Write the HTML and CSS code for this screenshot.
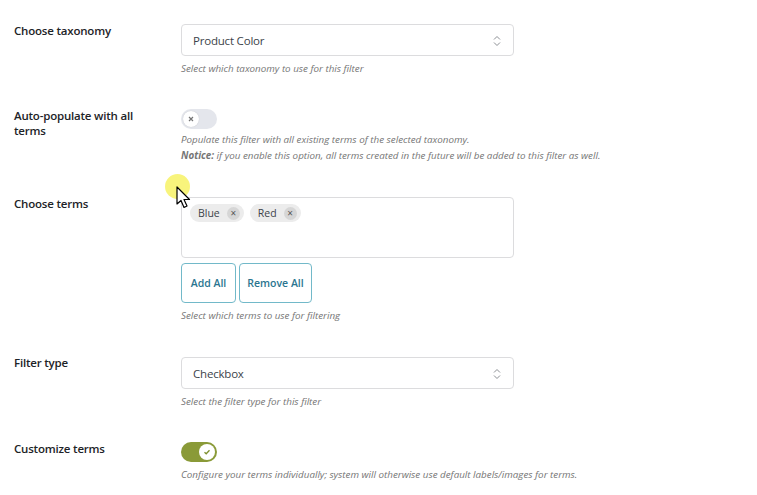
FILE: index.html
```html
<!DOCTYPE html>
<html>
<head>
<meta charset="utf-8">
<link rel="stylesheet" href="styles.css">
</head>
<body>
<div class="form">
  <div class="row row-tax">
    <div class="label">Choose taxonomy</div>
    <div class="field">
      <div class="select"><span>Product Color</span>
        <svg class="chev" width="8" height="12" viewBox="0 0 8 12"><path d="M1 4.5L4 1.5L7 4.5M1 7.5L4 10.5L7 7.5" fill="none" stroke="#8c8f94" stroke-width="1"/></svg>
      </div>
      <div class="help">Select which taxonomy to use for this filter</div>
    </div>
  </div>
  <div class="row row-auto">
    <div class="label">Auto-populate with all terms</div>
    <div class="field">
      <div class="toggle off"><span class="knob"><svg width="8" height="8" viewBox="0 0 8 8"><path d="M2 2L6 6M6 2L2 6" stroke="#757575" stroke-width="1.2"/></svg></span></div>
      <div class="help help-two">Populate this filter with all existing terms of the selected taxonomy.<br><b>Notice:</b> if you enable this option, all terms created in the future will be added to this filter as well.</div>
    </div>
  </div>
  <div class="row row-terms">
    <div class="label">Choose terms</div>
    <div class="field">
      <div class="terms">
        <span class="chip">Blue<span class="x">×</span></span>
        <span class="chip">Red<span class="x">×</span></span>
      </div>
      <div class="buttons">
        <button class="btn btn-add">Add All</button>
        <button class="btn btn-remove">Remove All</button>
      </div>
      <div class="help">Select which terms to use for filtering</div>
    </div>
  </div>
  <div class="row row-type">
    <div class="label">Filter type</div>
    <div class="field">
      <div class="select"><span>Checkbox</span>
        <svg class="chev" width="8" height="12" viewBox="0 0 8 12"><path d="M1 4.5L4 1.5L7 4.5M1 7.5L4 10.5L7 7.5" fill="none" stroke="#8c8f94" stroke-width="1"/></svg>
      </div>
      <div class="help">Select the filter type for this filter</div>
    </div>
  </div>
  <div class="row row-custom">
    <div class="label">Customize terms</div>
    <div class="field">
      <div class="toggle on"><span class="knob"><svg width="8" height="8" viewBox="0 0 8 8"><path d="M1.5 4.2L3.2 5.8L6.5 2.3" fill="none" stroke="#7e8f2e" stroke-width="1.3"/></svg></span></div>
      <div class="help">Configure your terms individually; system will otherwise use default labels/images for terms.</div>
    </div>
  </div>
</div>
<div class="cursor">
  <span class="halo"></span>
  <svg class="arrow" width="16" height="24" viewBox="0 0 16 24"><path d="M1 1L1 18L5 14.5L8 21.5L11 20L8 13.5L13.5 13.5Z" fill="#fff" stroke="#000" stroke-width="1.2" stroke-linejoin="round"/></svg>
</div>
</body>
</html>
```
FILE: styles.css
```css
html, body { margin: 0; padding: 0; background: #fff; }
body { font-family: "Open Sans", "Noto Sans", sans-serif; width: 757px; height: 495px; overflow: hidden; position: relative; }
.form { padding: 24px 0 0 14px; display: flex; flex-direction: column; }
.row { display: flex; }
.label { width: 167px; flex: none; font-size: 11.5px; font-weight: 600; color: #1d2327; line-height: 15px; letter-spacing: -0.2px; padding-right: 40px; box-sizing: border-box; margin-top: -1px; }
.field { display: flex; flex-direction: column; }
.select { width: 333px; height: 32px; box-sizing: border-box; border: 1px solid #dcdcde; border-radius: 4px; display: flex; align-items: center; justify-content: space-between; padding: 0 12px 0 11px; font-size: 11.5px; letter-spacing: -0.2px; color: #3c434a; }
.chev { margin-top: 1px; }
.help { font-size: 9.8px; font-style: italic; color: #757575; line-height: 16px; margin-top: 5px; }
.help b { font-weight: 700; }
.row-auto { margin-top: 31px; }
.row-auto .label { margin-top: 0; }
.toggle { width: 36px; height: 20px; border-radius: 10px; box-sizing: border-box; position: relative; display: flex; align-items: center; padding: 0 2px; }
.toggle.off { background: #e4e6ec; margin-top: 1px; }
.toggle.on { background: #8a9a38; justify-content: flex-end; }
.knob { width: 16px; height: 16px; border-radius: 50%; background: #fff; display: flex; align-items: center; justify-content: center; }
.toggle.off .knob { box-shadow: 0 0 1px rgba(0,0,0,0.2); }
.help-two { margin-top: 3px; }
.row-terms { margin-top: 31px; }
.row-terms .label { padding-top: 2px; }
.terms { width: 333px; height: 61px; box-sizing: border-box; border: 1px solid #dcdcde; border-radius: 4px; padding: 6px 8px; display: flex; gap: 6px; align-items: flex-start; margin-top: 2px; }
.chip { background: #ececec; border-radius: 10px; height: 18px; display: inline-flex; align-items: center; padding: 0 4px 0 8px; font-size: 10.5px; color: #3c434a; gap: 7px; }
.chip .x { width: 13px; height: 13px; border-radius: 50%; background: #d6d6d6; display: inline-flex; align-items: center; justify-content: center; font-size: 10px; color: #555; line-height: 1; }
.buttons { display: flex; gap: 3px; margin-top: 5px; }
.btn { height: 40px; box-sizing: border-box; border: 1px solid #72b9c9; border-radius: 4px; background: #fff; color: #2a7590; font-family: inherit; font-size: 10.5px; font-weight: 600; padding: 0; }
.btn-add { width: 55px; }
.btn-remove { width: 73px; }
.row-terms .help { margin-top: 5px; }
.row-type { margin-top: 33px; }
.row-type .label { margin-top: -2px; }
.row-custom { margin-top: 32px; }
.cursor { position: absolute; left: 165px; top: 174px; width: 30px; height: 40px; }
.halo { position: absolute; left: 0; top: 0; width: 25px; height: 25px; border-radius: 50%; background: rgba(245, 240, 80, 0.75); }
.arrow { position: absolute; left: 11px; top: 12px; }
```
